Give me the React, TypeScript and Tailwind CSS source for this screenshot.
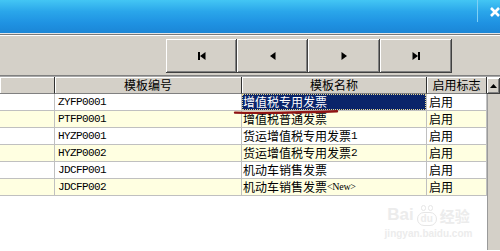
import React from "react";

const rows: [string, React.ReactNode, string][] = [
  ["ZYFP0001", "增值税专用发票", "启用"],
  ["PTFP0001", "增值税普通发票", "启用"],
  ["HYZP0001", <>货运增值税专用发票<span className="font-['Liberation_Mono'] text-[11px] tracking-[-0.6px]">1</span></>, "启用"],
  ["HYZP0002", <>货运增值税专用发票<span className="font-['Liberation_Mono'] text-[11px] tracking-[-0.6px]">2</span></>, "启用"],
  ["JDCFP001", "机动车销售发票", "启用"],
  ["JDCFP002", <>机动车销售发票<span className="font-['Liberation_Serif'] text-[10px] tracking-[-0.3px]">&lt;New&gt;</span></>, "启用"],
];

const btnShadow =
  "shadow-[inset_-1px_-1px_#404040,inset_1px_1px_#ffffff,inset_-2px_-2px_#808080]";

function NavIcon({ kind }: { kind: "first" | "prev" | "next" | "last" }) {
  return (
    <svg width="12" height="10" viewBox="0 0 12 10">
      {kind === "first" && (
        <>
          <rect x="2" y="1" width="2" height="8" fill="#000" />
          <polygon points="4,5 9.5,1 9.5,9" fill="#000" />
        </>
      )}
      {kind === "prev" && <polygon points="3,5 8.5,1 8.5,9" fill="#000" />}
      {kind === "next" && <polygon points="9,5 3.5,1 3.5,9" fill="#000" />}
      {kind === "last" && (
        <>
          <polygon points="8,5 2.5,1 2.5,9" fill="#000" />
          <rect x="8" y="1" width="2" height="8" fill="#000" />
        </>
      )}
    </svg>
  );
}

export default function App() {
  const cjk = "font-['Noto_Sans_CJK_SC',sans-serif]";
  const mono = "font-['Liberation_Mono',monospace] text-[11px] tracking-[-0.6px]";
  return (
    <div className={`relative w-[500px] h-[251px] overflow-hidden bg-white ${cjk} text-[12px] leading-none text-black`}>
      {/* title bar */}
      <div className="h-[33px] bg-[linear-gradient(to_bottom,#43c6f4_0%,#2aa6ea_35%,#1f92e2_70%,#1b86d6_100%)] flex justify-end">
        <div className="w-px h-[22px] bg-[#7fd0f4] mr-[12px]" />
        <div className="w-[10px] pt-[7px]">
          <svg width="12" height="10" viewBox="0 0 12 10">
            <path d="M1 1 L9 9 M9 1 L1 9" stroke="#fff" strokeWidth="2.6" />
          </svg>
        </div>
      </div>
      <div className="h-px bg-[#e4e4e4]" />
      <div className="h-px bg-[#7a7a7a]" />
      <div className="h-px bg-white" />
      {/* toolbar */}
      <div className="h-[39px] bg-[#d4d0c8] flex pl-[166px] pt-[3px]">
        {(["first", "prev", "next", "last"] as const).map((k, i) => (
          <div
            key={k}
            className={`${i < 2 ? "w-[71px]" : "w-[72px]"} h-[34px] bg-[#d4d0c8] ${btnShadow} flex items-center justify-center`}
          >
            <NavIcon kind={k} />
          </div>
        ))}
      </div>
      <div className="h-px bg-[#808080]" />
      <div className="h-px bg-[#a8a8a8]" />
      {/* grid */}
      <div className="flex h-[173px]">
        <div className="w-[487px] flex flex-col">
          {/* header */}
          <div className="flex h-[17px] bg-[#d4d0c8]">
            <div className="w-[55px] shadow-[inset_1px_1px_#ffffff] border-r border-b border-r-[#303030] border-b-[#808080]" />
            <div className="w-[187px] shadow-[inset_1px_1px_#ffffff] border-r border-b border-r-[#303030] border-b-[#808080] flex items-center justify-center">模板编号</div>
            <div className="w-[185px] shadow-[inset_1px_1px_#ffffff] border-r border-b border-r-[#303030] border-b-[#808080] flex items-center justify-center">模板名称</div>
            <div className="w-[60px] shadow-[inset_1px_1px_#ffffff] border-r border-b border-r-[#303030] border-b-[#808080] flex items-center justify-center">启用标志</div>
          </div>
          {rows.map((r, i) => {
            const bg = i % 2 === 1 ? "bg-[#ffffe1]" : "bg-white";
            const sel = i === 0;
            return (
              <div key={i} className={`flex h-[17px] ${bg}`}>
                <div className="w-[55px] border-r border-b border-[#c0c0c0]" />
                <div className={`w-[187px] border-r border-b border-[#c0c0c0] flex items-center pl-[3px] ${mono}`}>{r[0]}</div>
                <div className="w-[185px] border-r border-b border-[#c0c0c0] flex">
                  {sel ? (
                    <div className="flex-1 bg-[#0a246a] text-white flex items-center pl-px outline-1 outline-dotted outline-offset-[-1px] outline-[#e8d890]">
                      {r[1]}
                    </div>
                  ) : (
                    <div className="flex-1 flex items-center pl-px">{r[1]}</div>
                  )}
                </div>
                <div className="w-[60px] border-r border-b border-[#c0c0c0] flex items-center pl-[2px]">{r[2]}</div>
              </div>
            );
          })}
          <div className="flex-1 bg-white" />
        </div>
        {/* scrollbar */}
        <div className="w-[13px] flex flex-col">
          <div className={`h-[16px] mt-px bg-[#d4d0c8] ${btnShadow} flex items-center justify-center`}>
            <svg width="7" height="4" viewBox="0 0 7 4">
              <polygon points="3.5,0 7,4 0,4" fill="#000" />
            </svg>
          </div>
          <div className="flex-1 bg-[#d4d0c8] border-l border-[#9a9a9a]" />
        </div>
      </div>

      {/* red annotation underline */}
      <svg className="absolute left-0 top-0 pointer-events-none" width="500" height="251">
        <path d="M235 112.6 C 260 113.4, 300 112.4, 337 111.2" stroke="#8e1414" strokeWidth="2.4" fill="none" strokeLinecap="round" />
      </svg>

      {/* watermark */}
      <div className="absolute left-[381px] top-[196px] w-[95px] h-[44px] flex flex-col items-center text-[#ececec] pointer-events-none">
        <div className="flex items-end gap-[2px] h-[30px]">
          <span className="font-['Liberation_Sans',sans-serif] font-bold text-[17px] leading-none pb-[3px]">Bai</span>
          <div className="relative w-[22px] h-[28px] flex flex-col items-center justify-end">
            <div className="flex gap-[2px] mb-[1px]">
              <div className="w-[5px] h-[6px] rounded-full border border-[#e6e6e6]" />
              <div className="w-[5px] h-[6px] rounded-full border border-[#e6e6e6]" />
            </div>
            <div className="w-[20px] h-[14px] rounded-[7px] border border-[#e6e6e6] flex items-center justify-center font-['Liberation_Sans',sans-serif] font-bold text-[10px] leading-none">du</div>
          </div>
          <span className="text-[15px] leading-none pb-[3px] font-bold">经验</span>
        </div>
        <div className="font-['Liberation_Sans',sans-serif] font-bold text-[10px] leading-none mt-[3px]">jingyan.baidu.com</div>
      </div>
    </div>
  );
}
